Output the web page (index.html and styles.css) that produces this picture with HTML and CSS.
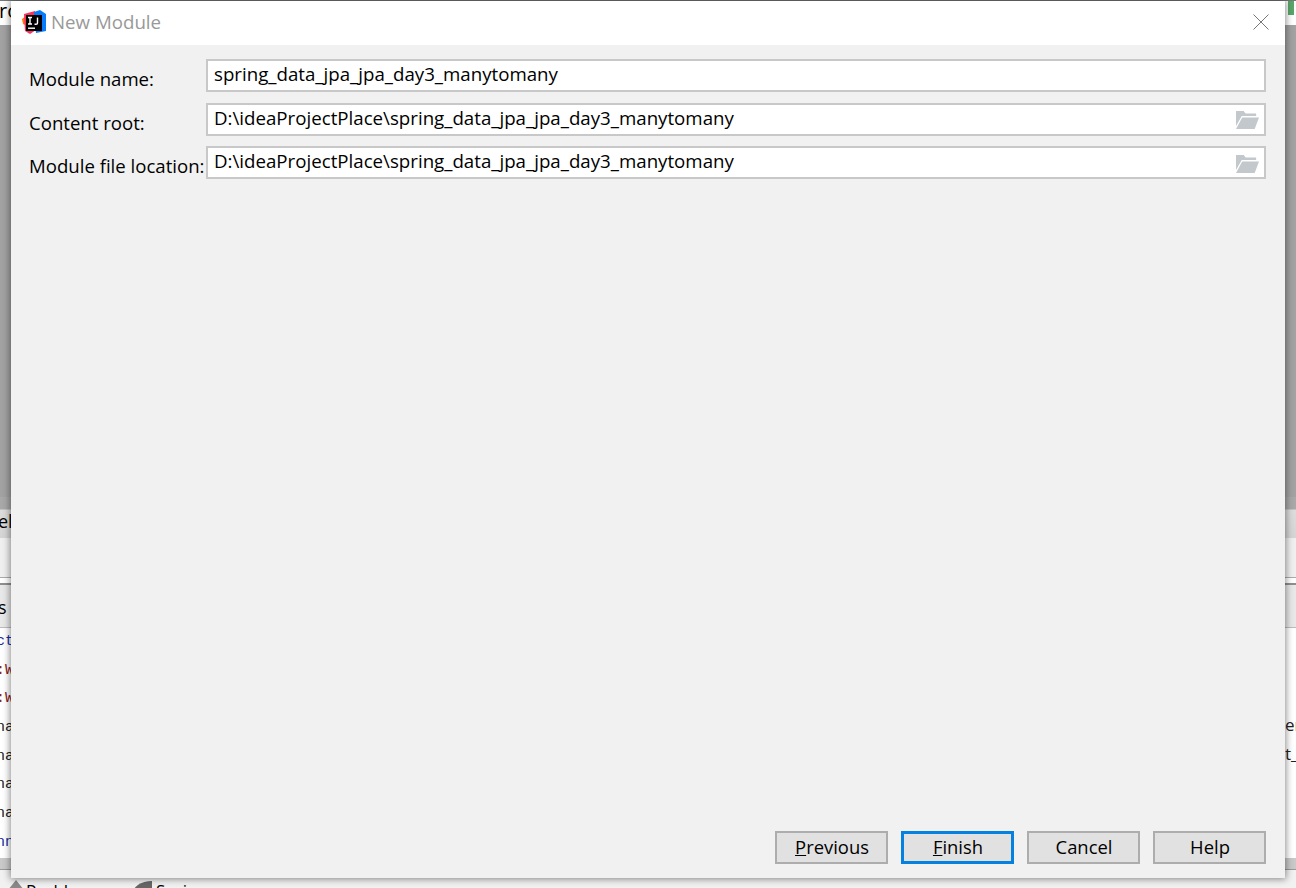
FILE: index.html
```html
<!DOCTYPE html>
<html lang="en">
<head>
<meta charset="utf-8">
<title>New Module</title>
<link rel="stylesheet" href="styles.css">
</head>
<body>
<div class="backdrop">
  <div class="bd-top"><span class="bd-ro">ro</span><span class="bd-green"></span></div>
  <div class="bd-dim"></div>
  <div class="bd-tab"><span class="bd-el">el</span></div>
  <div class="bd-tools"></div>
  <div class="bd-sep"></div>
  <div class="bd-head"><span class="bd-s">s</span></div>
  <div class="bd-log">
    <div class="log-row blue"><span>ct</span></div>
    <div class="log-row red"><span>:W</span></div>
    <div class="log-row red"><span>:W</span></div>
    <div class="log-row"><span>na</span><span class="log-right">er</span></div>
    <div class="log-row"><span>na</span><span class="log-right">t_</span></div>
    <div class="log-row"><span>na</span></div>
    <div class="log-row"><span>na</span></div>
    <div class="log-row blue"><span>nn</span></div>
  </div>
  <div class="bd-status"></div>
  <div class="bd-bottom">
    <span class="bd-warn"></span><span class="bd-tabname">Problems</span>
    <span class="bd-leaf"></span><span class="bd-tabname">Spring</span>
  </div>
</div>

<div class="dialog">
  <header class="titlebar">
    <svg class="app-icon" width="24" height="24" viewBox="0 0 24 24" aria-hidden="true">
      <path d="M0 9 L4 6 L5 16 L1 14Z" fill="#f97a12"/>
      <path d="M2 4 L13 1 L14 20 L8 24 L3 21Z" fill="#fe315d"/>
      <path d="M12 2 L18 0 L24 4 L24 21 L14 23Z" fill="#087cfa"/>
      <rect x="4" y="5" width="16" height="16" fill="#000"/>
      <rect x="6" y="17.500" width="7" height="1.400" fill="#fff"/>
      <path d="M6 7.500h4M8 7.500v6.500M6 14h4M15.500 7.500v5.500q0 1.200 -1.500 1.200h-1.500" fill="none" stroke="#fff" stroke-width="1.400"/>
    </svg>
    <span class="title">New Module</span>
    <svg class="close" width="16" height="16" viewBox="0 0 16 16" aria-hidden="true">
      <path d="M0.500 0.500L15.500 15.500M15.500 0.500L0.500 15.500" stroke="#777" stroke-width="1" fill="none"/>
    </svg>
  </header>
  <main class="form">
    <label class="label">Module name:</label>
    <div class="field"><span>spring_data_jpa_jpa_day3_manytomany</span></div>
    <label class="label">Content root:</label>
    <div class="field"><span>D:\ideaProjectPlace\spring_data_jpa_jpa_day3_manytomany</span>
      <svg class="folder" width="23" height="18" viewBox="0 0 24 18" preserveAspectRatio="none" aria-hidden="true">
        <path d="M0 0H8L10 2.500H21V5H6L0 15Z" fill="#c2c8cc"/>
        <path d="M6.500 6.500H24L19.500 18H0Z" fill="#c2c8cc"/>
      </svg>
    </div>
    <label class="label">Module file location:</label>
    <div class="field"><span>D:\ideaProjectPlace\spring_data_jpa_jpa_day3_manytomany</span>
      <svg class="folder" width="23" height="18" viewBox="0 0 24 18" preserveAspectRatio="none" aria-hidden="true">
        <path d="M0 0H8L10 2.500H21V5H6L0 15Z" fill="#c2c8cc"/>
        <path d="M6.500 6.500H24L19.500 18H0Z" fill="#c2c8cc"/>
      </svg>
    </div>
  </main>
  <footer class="actions">
    <button class="btn"><u>P</u>revious</button>
    <button class="btn primary"><u>F</u>inish</button>
    <button class="btn">Cancel</button>
    <button class="btn">Help</button>
  </footer>
</div>
</body>
</html>
```
FILE: styles.css
```css
* { box-sizing: border-box; }
html, body { margin: 0; height: 100%; overflow: hidden; }
body { font-family: "Open Sans", "Noto Sans", sans-serif; color: #000; background: #f1f1f1; }

.backdrop { display: flex; flex-direction: column; height: 888px; width: 1296px; overflow: hidden; }
.bd-top { height: 25px; flex: none; background: #fff; display: flex; justify-content: space-between; overflow: hidden; border-top: 1px solid #777; }
.bd-ro { font-size: 20px; line-height: 20px; margin-left: -1px; }
.bd-green { width: 6px; height: 14px; background: #5aa66a; margin-right: 2px; }
.bd-dim { height: 472px; flex: none; background: #a2a2a2; }
.bd-tab { height: 41px; flex: none; background: linear-gradient(#a8a8a8 0, #a8a8a8 12px, #dcdcdc 13px, #d4d4d4 100%); padding-top: 12px; font-size: 18px; line-height: 24px; overflow: hidden; }
.bd-el { margin-left: -2px; }
.bd-tools { height: 40px; flex: none; background: #efefef; border-bottom: 1px solid #aaa; }
.bd-sep { height: 7px; flex: none; background: #fff; border-bottom: 2px solid #8f8f8f; }
.bd-head { height: 43px; flex: none; background: #e8e8e8; border-bottom: 1px solid #bbb; font-size: 18px; line-height: 44px; overflow: hidden; }
.bd-s { margin-left: -2px; }
.bd-log { height: 230px; flex: none; background: #fff; font: 15px/28.700px "Liberation Mono", monospace; color: #222; }
.log-row { height: 28.700px; display: flex; justify-content: space-between; overflow: hidden; }
.log-row > span:first-child { margin-left: -4px; }
.log-right { font: 17px/21px "Open Sans", sans-serif; width: 11px; white-space: nowrap; overflow: hidden; }
.blue { color: #1a2ea0; }
.red { color: #8a2020; }
.bd-status { height: 12px; flex: none; background: #c9c9c9; border-bottom: 1px solid #999; }
.bd-bottom { height: 18px; flex: none; background: #f1f1f1; padding-left: 8px; display: flex; align-items: flex-start; overflow: hidden; font-size: 17px; line-height: 24px; }
.bd-warn { width: 0; height: 0; border: 8px solid transparent; border-bottom: 10px solid #8a8a8a; margin: 2px 2px 0 0; }
.bd-tabname { padding-top: 9px; width: 106px; white-space: nowrap; }
.bd-leaf { width: 20px; height: 14px; margin: 11px 4px 0 0; background: #666; border-radius: 100% 0 0 0; }

.dialog { position: absolute; left: 11px; top: 1px; width: 1274px; height: 877px; background: #f1f1f1; display: flex; flex-direction: column; box-shadow: 0 0 7px 1px rgba(0,0,0,.45); }
.titlebar { height: 44px; flex: none; background: #fff; display: flex; align-items: center; padding: 0 16px 2px 11px; }
.app-icon { flex: none; }
.title { margin: 0 0 2px 5px; flex: 1; font-size: 18.700px; color: #999; }
.close { flex: none; }
.form { flex: 1; display: grid; grid-template-columns: 177px 1fr; grid-auto-rows: 33px; row-gap: 10.500px; padding: 14px 19px 0 18px; align-content: start; }
.label { font-size: 18.600px; line-height: 39.100px; white-space: nowrap; height: 33px; }
.field { background: #fff; border: 2px solid #c8c8c8; display: flex; align-items: center; justify-content: space-between; padding: 0 5px 0 6px; font-size: 18.700px; line-height: 25px; white-space: nowrap; }
.field > span { margin-top: -3.500px; }
.folder { flex: none; margin-top: 2px; }
.actions { flex: none; display: flex; justify-content: flex-end; gap: 13px; padding: 0 19px 14px 0; }
.btn { width: 113px; height: 33px; background: #e1e1e1; border: 2px solid #adadad; font: inherit; font-size: 18.400px; line-height: 24px; color: #000; padding: 0 0 2px 1px; }
.btn.primary { border: 3px solid #0582e0; }
```
